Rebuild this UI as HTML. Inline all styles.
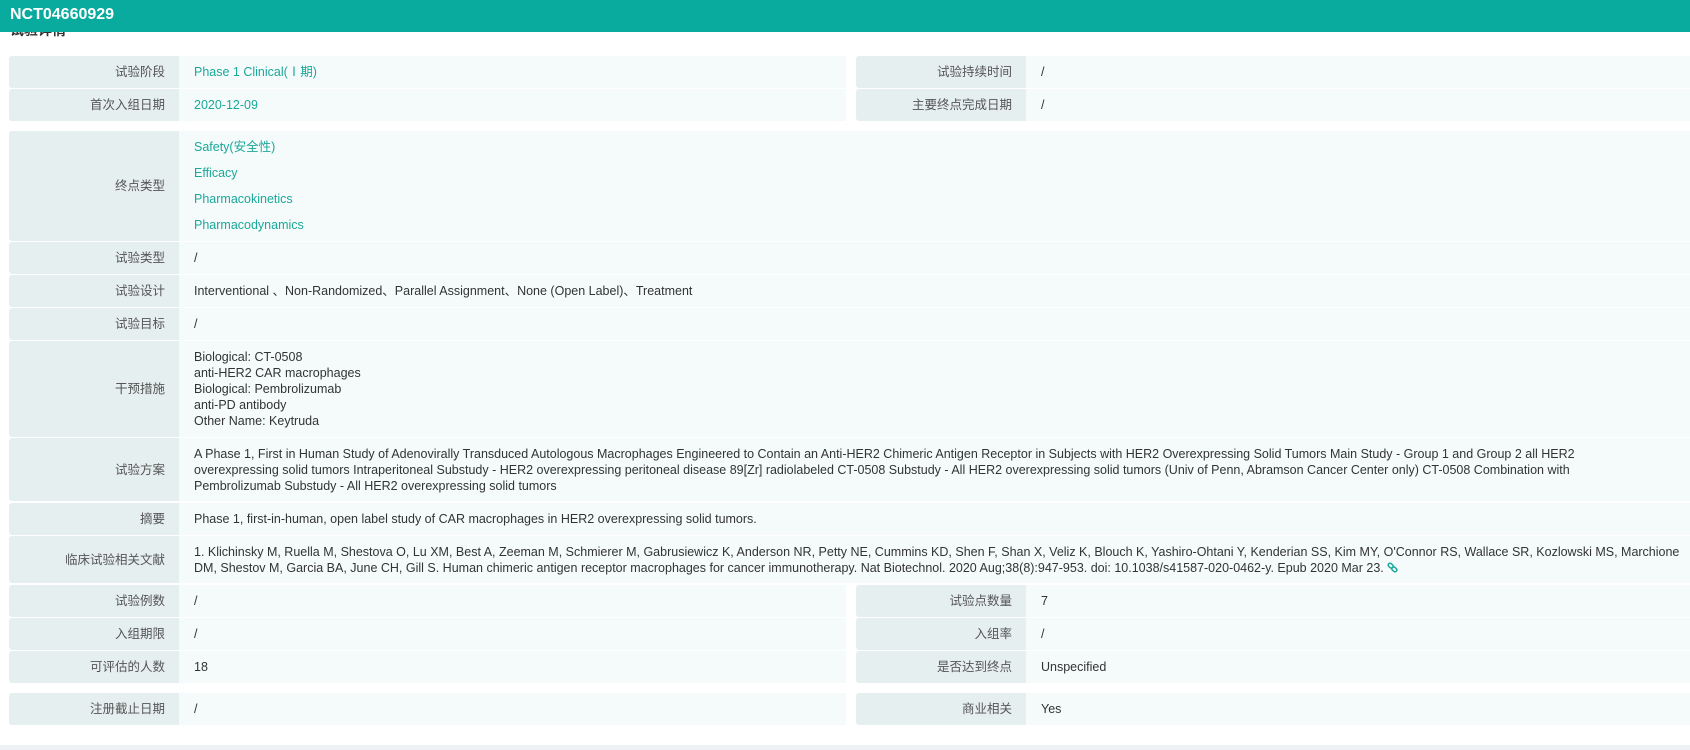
<!DOCTYPE html>
<html><head><meta charset="utf-8"><style>
*{margin:0;padding:0;box-sizing:border-box}
body{width:1690px;height:750px;overflow:hidden;background:#fff;font-family:"Liberation Sans","Noto Sans CJK SC",sans-serif;font-size:12.5px;color:#333;position:relative}
.hd{position:absolute;left:0;top:0;width:1690px;height:32px;background:#09ab9e;color:#fff;font-weight:bold;font-size:16px;line-height:30px;padding-left:10px;z-index:2}
.ttl{position:absolute;left:10px;top:20px;font-size:14px;font-weight:bold;color:#333}
.r{position:absolute;left:9px;display:flex}
.l{background:#e6eff0;color:#555;text-align:right;padding-right:14px;display:flex;align-items:center;justify-content:flex-end;border-radius:3px 0 0 3px;line-height:16px}
.l span{display:block;line-height:16px;height:16px;margin-top:0}
.v{background:#f5fbfb;padding-left:15px;display:flex;flex-direction:column;justify-content:center;line-height:16px}
.t{color:#1aa89a}
.bot{position:absolute;left:0;top:745px;width:1690px;height:5px;background:#eef2f6}
</style></head><body>
<div class="ttl">试验详情</div>
<div class="hd">NCT04660929</div>

<div class="r" style="top:56px;height:32px"><div class="l" style="width:170px"><span>试验阶段</span></div><div class="v t" style="width:667px">Phase 1 Clinical(Ⅰ期)</div></div>
<div class="r" style="top:56px;left:856px;height:32px"><div class="l" style="width:170px"><span>试验持续时间</span></div><div class="v" style="width:664px">/</div></div>
<div class="r" style="top:89px;height:32px"><div class="l" style="width:170px"><span>首次入组日期</span></div><div class="v t" style="width:667px">2020-12-09</div></div>
<div class="r" style="top:89px;left:856px;height:32px"><div class="l" style="width:170px"><span>主要终点完成日期</span></div><div class="v" style="width:664px">/</div></div>

<div class="r" style="top:131px;height:110px"><div class="l" style="width:170px"><span>终点类型</span></div><div class="v t" style="width:1511px;line-height:26px">Safety(安全性)<br>Efficacy<br>Pharmacokinetics<br>Pharmacodynamics</div></div>
<div class="r" style="top:242px;height:32px"><div class="l" style="width:170px"><span>试验类型</span></div><div class="v" style="width:1511px">/</div></div>
<div class="r" style="top:275px;height:32px"><div class="l" style="width:170px"><span>试验设计</span></div><div class="v" style="width:1511px">Interventional 、Non-Randomized、Parallel Assignment、None (Open Label)、Treatment</div></div>
<div class="r" style="top:308px;height:32px"><div class="l" style="width:170px"><span>试验目标</span></div><div class="v" style="width:1511px">/</div></div>
<div class="r" style="top:341px;height:96px"><div class="l" style="width:170px"><span>干预措施</span></div><div class="v" style="width:1511px">Biological: CT-0508<br>anti-HER2 CAR macrophages<br>Biological: Pembrolizumab<br>anti-PD antibody<br>Other Name: Keytruda</div></div>
<div class="r" style="top:438px;height:63px"><div class="l" style="width:170px"><span>试验方案</span></div><div class="v" style="width:1511px">A Phase 1, First in Human Study of Adenovirally Transduced Autologous Macrophages Engineered to Contain an Anti-HER2 Chimeric Antigen Receptor in Subjects with HER2 Overexpressing Solid Tumors Main Study - Group 1 and Group 2 all HER2<br>overexpressing solid tumors Intraperitoneal Substudy - HER2 overexpressing peritoneal disease 89[Zr] radiolabeled CT-0508 Substudy - All HER2 overexpressing solid tumors (Univ of Penn, Abramson Cancer Center only) CT-0508 Combination with<br>Pembrolizumab Substudy - All HER2 overexpressing solid tumors</div></div>
<div class="r" style="top:503px;height:32px"><div class="l" style="width:170px"><span>摘要</span></div><div class="v" style="width:1511px">Phase 1, first-in-human, open label study of CAR macrophages in HER2 overexpressing solid tumors.</div></div>
<div class="r" style="top:536px;height:47px"><div class="l" style="width:170px"><span>临床试验相关文献</span></div><div class="v" style="width:1511px">1. Klichinsky M, Ruella M, Shestova O, Lu XM, Best A, Zeeman M, Schmierer M, Gabrusiewicz K, Anderson NR, Petty NE, Cummins KD, Shen F, Shan X, Veliz K, Blouch K, Yashiro-Ohtani Y, Kenderian SS, Kim MY, O'Connor RS, Wallace SR, Kozlowski MS, Marchione<br><span>DM, Shestov M, Garcia BA, June CH, Gill S. Human chimeric antigen receptor macrophages for cancer immunotherapy. Nat Biotechnol. 2020 Aug;38(8):947-953. doi: 10.1038/s41587-020-0462-y. Epub 2020 Mar 23. <svg width="11" height="11" viewBox="0 0 12 12" style="vertical-align:-1px"><g fill="none" stroke="#1aa89a" stroke-width="1.6"><rect x="1" y="2" width="6" height="4" rx="2" transform="rotate(40 4 4)"/><rect x="5" y="6" width="6" height="4" rx="2" transform="rotate(40 8 8)"/></g></svg></span></div></div>

<div class="r" style="top:585px;height:32px"><div class="l" style="width:170px"><span>试验例数</span></div><div class="v" style="width:667px">/</div></div>
<div class="r" style="top:585px;left:856px;height:32px"><div class="l" style="width:170px"><span>试验点数量</span></div><div class="v" style="width:664px">7</div></div>
<div class="r" style="top:618px;height:32px"><div class="l" style="width:170px"><span>入组期限</span></div><div class="v" style="width:667px">/</div></div>
<div class="r" style="top:618px;left:856px;height:32px"><div class="l" style="width:170px"><span>入组率</span></div><div class="v" style="width:664px">/</div></div>
<div class="r" style="top:651px;height:32px"><div class="l" style="width:170px"><span>可评估的人数</span></div><div class="v" style="width:667px">18</div></div>
<div class="r" style="top:651px;left:856px;height:32px"><div class="l" style="width:170px"><span>是否达到终点</span></div><div class="v" style="width:664px">Unspecified</div></div>

<div class="r" style="top:693px;height:32px"><div class="l" style="width:170px"><span>注册截止日期</span></div><div class="v" style="width:667px">/</div></div>
<div class="r" style="top:693px;left:856px;height:32px"><div class="l" style="width:170px"><span>商业相关</span></div><div class="v" style="width:664px">Yes</div></div>

<div class="bot"></div>
</body></html>
